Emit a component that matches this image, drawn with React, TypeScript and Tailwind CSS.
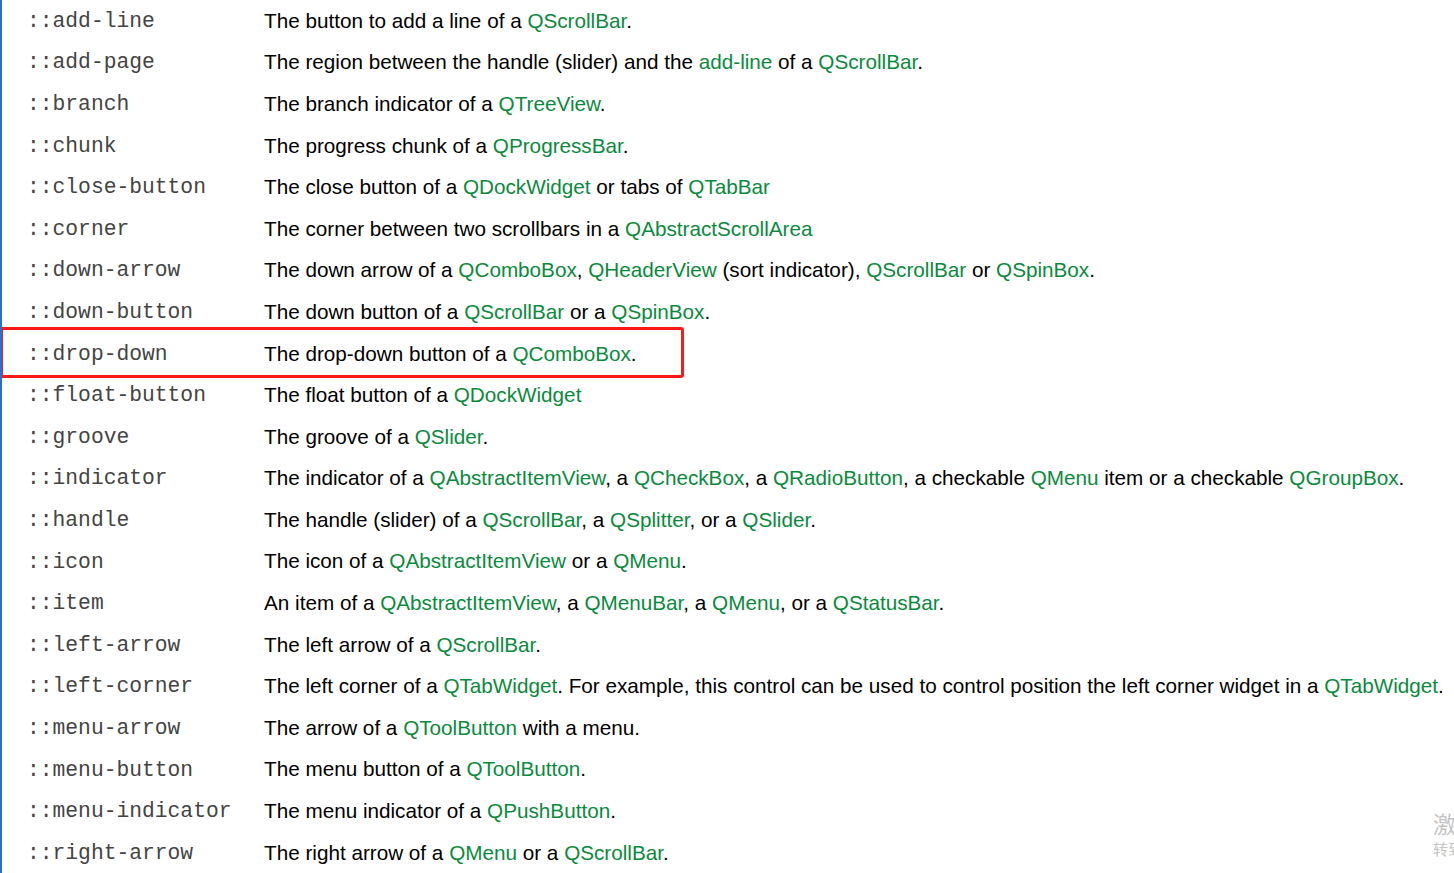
import React from 'react';

type Part = string | { link: string };

const rows: { name: string; desc: Part[] }[] = [
  { name: '::add-line', desc: ['The button to add a line of a ', { link: 'QScrollBar' }, '.'] },
  { name: '::add-page', desc: ['The region between the handle (slider) and the ', { link: 'add-line' }, ' of a ', { link: 'QScrollBar' }, '.'] },
  { name: '::branch', desc: ['The branch indicator of a ', { link: 'QTreeView' }, '.'] },
  { name: '::chunk', desc: ['The progress chunk of a ', { link: 'QProgressBar' }, '.'] },
  { name: '::close-button', desc: ['The close button of a ', { link: 'QDockWidget' }, ' or tabs of ', { link: 'QTabBar' }] },
  { name: '::corner', desc: ['The corner between two scrollbars in a ', { link: 'QAbstractScrollArea' }] },
  { name: '::down-arrow', desc: ['The down arrow of a ', { link: 'QComboBox' }, ', ', { link: 'QHeaderView' }, ' (sort indicator), ', { link: 'QScrollBar' }, ' or ', { link: 'QSpinBox' }, '.'] },
  { name: '::down-button', desc: ['The down button of a ', { link: 'QScrollBar' }, ' or a ', { link: 'QSpinBox' }, '.'] },
  { name: '::drop-down', desc: ['The drop-down button of a ', { link: 'QComboBox' }, '.'] },
  { name: '::float-button', desc: ['The float button of a ', { link: 'QDockWidget' }] },
  { name: '::groove', desc: ['The groove of a ', { link: 'QSlider' }, '.'] },
  { name: '::indicator', desc: ['The indicator of a ', { link: 'QAbstractItemView' }, ', a ', { link: 'QCheckBox' }, ', a ', { link: 'QRadioButton' }, ', a checkable ', { link: 'QMenu' }, ' item or a checkable ', { link: 'QGroupBox' }, '.'] },
  { name: '::handle', desc: ['The handle (slider) of a ', { link: 'QScrollBar' }, ', a ', { link: 'QSplitter' }, ', or a ', { link: 'QSlider' }, '.'] },
  { name: '::icon', desc: ['The icon of a ', { link: 'QAbstractItemView' }, ' or a ', { link: 'QMenu' }, '.'] },
  { name: '::item', desc: ['An item of a ', { link: 'QAbstractItemView' }, ', a ', { link: 'QMenuBar' }, ', a ', { link: 'QMenu' }, ', or a ', { link: 'QStatusBar' }, '.'] },
  { name: '::left-arrow', desc: ['The left arrow of a ', { link: 'QScrollBar' }, '.'] },
  { name: '::left-corner', desc: ['The left corner of a ', { link: 'QTabWidget' }, '. For example, this control can be used to control position the left corner widget in a ', { link: 'QTabWidget' }, '.'] },
  { name: '::menu-arrow', desc: ['The arrow of a ', { link: 'QToolButton' }, ' with a menu.'] },
  { name: '::menu-button', desc: ['The menu button of a ', { link: 'QToolButton' }, '.'] },
  { name: '::menu-indicator', desc: ['The menu indicator of a ', { link: 'QPushButton' }, '.'] },
  { name: '::right-arrow', desc: ['The right arrow of a ', { link: 'QMenu' }, ' or a ', { link: 'QScrollBar' }, '.'] },
];

const App: React.FC = () => {
  return (
    <div className="relative w-[1454px] h-[873px] overflow-hidden bg-white border-l-2 border-[#2a6fc9]">
      <div className="flex flex-col -mt-[0.5px]">
        {rows.map((r, i) => (
          <div key={i} className="relative flex items-center h-[41.6px] whitespace-nowrap">
            {r.name === '::drop-down' && (
              <div className="absolute left-[-2px] top-[-5.5px] w-[684px] h-[51px] border-[3px] border-[#ff1a1a] rounded-[3px]" />
            )}
            <div className="w-[262px] pl-[25px] pt-[3px] text-[21.3px] text-[#444444] font-['Liberation_Mono','Courier_New',monospace]">
              {r.name}
            </div>
            <div className="text-[20.7px] text-black font-['Liberation_Sans',Arial,sans-serif]">
              {r.desc.map((p, j) =>
                typeof p === 'string' ? (
                  <span key={j}>{p}</span>
                ) : (
                  <span key={j} className="text-[#0a8a3c]">{p.link}</span>
                )
              )}
            </div>
          </div>
        ))}
      </div>

      {/* windows activation watermark, cut off at the edge as in the screenshot */}
      <div className="absolute left-[1431px] top-[812px] whitespace-nowrap text-[#c4c4c4] font-['Noto_Sans_CJK_SC',sans-serif] leading-none">
        <div className="text-[23px]">激活 Windows</div>
        <div className="text-[15px] mt-[6px]">转到“设置”以激活 Windows。</div>
      </div>
    </div>
  );
};

export default App;
